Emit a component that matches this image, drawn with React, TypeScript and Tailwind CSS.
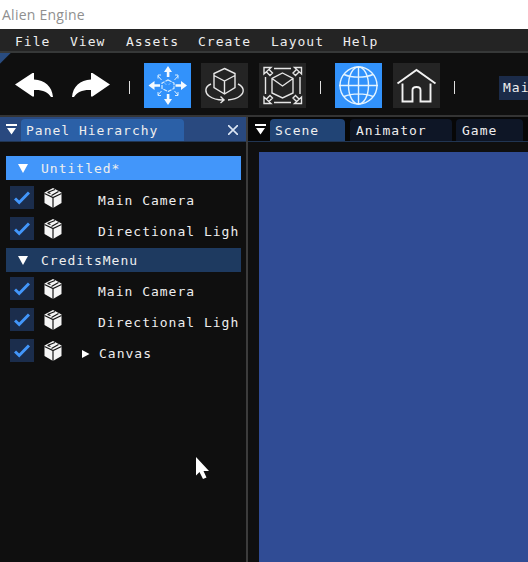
import React from 'react';

const menus = [
  { label: 'File', width: 'w-[55px]' },
  { label: 'View', width: 'w-[56px]' },
  { label: 'Assets', width: 'w-[72px]' },
  { label: 'Create', width: 'w-[73px]' },
  { label: 'Layout', width: 'w-[72px]' },
  { label: 'Help', width: 'w-[60px]' },
];

function ArrowIcon({ flip = false }: { flip?: boolean }) {
  return (
    <svg width="38" height="24" viewBox="0 0 38 24" className={flip ? '-scale-x-100' : ''}>
      <path d="M0 11.500 17.500 0H19V6.500C30 7.500 37 13 38 24h-2C33 19 27 16.500 19 17v6.500H17.500Z" fill="#fff" />
    </svg>
  );
}

function MoveIcon() {
  return (
    <svg width="47" height="45" viewBox="0 0 47 45" fill="none" stroke="#d5ecff">
      <g fill="#f4faff" stroke="none">
        <path d="M24 3l-4 6h2.800v5h2.600V9H28z" />
        <path d="M24 42l-4-6h2.800v-5h2.600v5H28z" />
        <path d="M4.500 22.500l6-4.500v3.300h5.500v2.400h-5.500V27z" />
        <path d="M43 22.500l-6-4.500v3.300h-5.500v2.400H37V27z" />
      </g>
      <path d="M24 17l6 3v5.500l-6 3-6-3V20z" strokeWidth="1.200" strokeDasharray="4 1" />
      <path d="M21 20.500l1 1m4-1l-1 1M17.500 17l-3.500-4m0 2.500V12h3M30.500 17l3.500-4m-3-1h3v3.500M17.500 28l-3.500 4m0-3v3.500h3M30.500 28l3.500 4m0-3v3.500h-3" strokeWidth="1" />
    </svg>
  );
}

function RotateIcon() {
  return (
    <svg width="47" height="45" viewBox="0 0 47 45" fill="none" stroke="#e6e6e6" strokeWidth="1.400">
      <path d="M23.500 5.500L34 10.500v14L23.500 31 13 24.500v-14zM13 12.500L23.500 18 34 12.500M23.500 18v13" />
      <path d="M10 21C3 24 4 30 8 33c4 3 9 4 14 4M37 21c6 3 7 8 2 12-3 2.500-7 3.500-12 4M19.500 33.500l3.500 3.500-3.500 3" />
    </svg>
  );
}

function ScaleIcon() {
  return (
    <svg width="47" height="45" viewBox="0 0 47 45" fill="none" stroke="#e6e6e6" strokeWidth="1.400">
      <path d="M15 5.500h17M15 39.500h17M6.500 14v17M41 14v17" />
      <path d="M23.500 10L34 15.500V30l-10.500 5L13 30V15.500zM13 15.500L23.500 23 34 15.500" />
      <g>
        <path d="M5 4.500h7l-7 6.500zM7.500 9l3.500 3.500 2.500-2.500L10 6.500" />
        <path d="M42.500 4.500h-7l7 6.500zM40 9l-3.500 3.500-2.500-2.500 3.500-3.500" />
        <path d="M5 40.500h7L5 34zM7.500 36l3.500-3.500 2.500 2.500-3.500 3.500" />
        <path d="M42.500 40.500h-7l7-6.500zM40 36l-3.500-3.500-2.500 2.500 3.500 3.500" />
      </g>
    </svg>
  );
}

function GlobeIcon() {
  return (
    <svg width="47" height="45" viewBox="0 0 47 45" fill="none" stroke="#e4f4ff" strokeWidth="1.400">
      <circle cx="23.500" cy="22.500" r="18.500" />
      <ellipse cx="23.500" cy="22.500" rx="10" ry="18.500" />
      <path d="M23.500 3v39M4 22.500h39M9 11.500c8 3.500 21 3.500 29 0M9 33.500c8-3.500 21-3.500 29 0" />
    </svg>
  );
}

function HomeIcon() {
  return (
    <svg width="47" height="45" viewBox="0 0 47 45" fill="none" stroke="#f2f2f2" strokeWidth="1.900">
      <path d="M4.500 20.500L23.500 7l19 13.500M9.500 20.500v18h10V27c0-4 8-4 8 0v11.500h10v-18" />
    </svg>
  );
}

function Tool({ active = false, className = '', children }: { active?: boolean; className?: string; children: React.ReactNode }) {
  return (
    <button className={`h-[45px] w-[47px] shrink-0 ${active ? 'bg-[#3292fb]' : 'bg-[#242424]'} ${className}`}>{children}</button>
  );
}

function Collapse() {
  return (
    <svg width="11" height="11" viewBox="0 0 11 11" className="shrink-0" fill="#fff">
      <path d="M0 0h11v2H0zM1 4h9L5.500 10.500z" />
    </svg>
  );
}

function GroupHeader({ label, className }: { label: string; className: string }) {
  return (
    <div className={`ml-1.5 flex h-6 w-[235px] items-center pl-3 ${className}`}>
      <svg width="10" height="9" viewBox="0 0 10 9" fill="#fff"><path d="M0 0h10L5 9z" /></svg>
      <span className="ml-[13px] pt-0.5">{label}</span>
    </div>
  );
}

function ObjectRow({ label, expandable = false, indent = 'ml-[36px]' }: { label: string; expandable?: boolean; indent?: string }) {
  return (
    <div className="flex h-[31px] items-start pl-2.5">
      <span className="flex h-[23px] w-6 shrink-0 items-center justify-center bg-[#1b2d4c]">
        <svg width="16" height="14" viewBox="0 0 16 14" fill="none" stroke="#4296fa" strokeWidth="3"><path d="M1 7.500l4.200 4L15 1.500" /></svg>
      </span>
      <svg width="18" height="20" viewBox="0 0 18 20" className="ml-[10px] mt-[2px] shrink-0">
        <path d="M9 0l8.500 4.500v10.500L9 20 .5 15V4.500z" fill="#f5f5f5" />
        <path d="M.5 5.500L9 9.500l8.500-4M9 9.500V20M3.500 4.500L11 1.500M7.500 7.500L14.500 3.500M3.500 4.500l3 1" fill="none" stroke="#151515" strokeWidth="1.200" />
      </svg>
      {expandable ? (
        <>
          <svg width="8" height="8" viewBox="0 0 8 8" fill="#fff" className="ml-5 mt-[11px] shrink-0"><path d="M0 0l7.500 4L0 8z" /></svg>
          <span className="ml-[9px] mt-[5px]">{label}</span>
        </>
      ) : (
        <span className={`mt-[5px] ${indent}`}>{label}</span>
      )}
    </div>
  );
}

export default function App() {
  return (
    <div className="relative flex h-[562px] w-[528px] flex-col overflow-hidden whitespace-pre bg-[#0f0f0f] font-['DejaVu_Sans_Mono',monospace] text-[13px] leading-5 tracking-[1px] text-[#eeeeee]">
      <header className="h-[29px] shrink-0 bg-white pl-[2px] pt-[5px] font-['Open_Sans','Noto_Sans',sans-serif] text-[14px] tracking-[0.25px] text-[#8f8f8f]">Alien Engine</header>
      <nav className="flex h-6 shrink-0 items-center border-b-2 border-[#363838] bg-[#242424] pl-[15px] pt-[3px]">
        {menus.map((m) => <span key={m.label} className={m.width}>{m.label}</span>)}
      </nav>
      <section className="flex h-[62px] shrink-0 items-center bg-[linear-gradient(135deg,#294c80_7px,#0f0f0f_8px)] pb-[1px] pl-[15px] pt-[4px]">
        <span className="flex pb-0.5"><ArrowIcon /></span>
        <span className="ml-[19px] flex pb-0.5"><ArrowIcon flip /></span>
        <i className="ml-[19px] mt-1 h-[13px] w-px bg-[#e0e0e0]" />
        <Tool active className="ml-[14px]"><MoveIcon /></Tool>
        <Tool className="ml-[10px]"><RotateIcon /></Tool>
        <Tool className="ml-[11px]"><ScaleIcon /></Tool>
        <i className="ml-[14px] mt-1 h-[13px] w-px bg-[#e0e0e0]" />
        <Tool active className="ml-[14px]"><GlobeIcon /></Tool>
        <Tool className="ml-[11px]"><HomeIcon /></Tool>
        <i className="ml-[14px] mt-1 h-[13px] w-px bg-[#e0e0e0]" />
        <div className="ml-[44px] mt-1 flex h-6 w-[29px] shrink-0 items-center bg-[#1b2b49] pl-1">Mai</div>
      </section>
      <main className="flex min-h-0 flex-1 border-t-2 border-[#343434]">
        <aside className="flex w-[246px] shrink-0 flex-col">
          <div className="flex h-[25px] items-center border-b border-[#213552] bg-[#29497f] pl-1.5">
            <Collapse />
            <div className="ml-1 mt-[2px] h-[22px] w-[163px] rounded-t bg-[#2b60a7] pl-[5px] pt-0.5">Panel Hierarchy</div>
            <svg width="10" height="10" viewBox="0 0 10 10" className="ml-11 mt-0.5" stroke="#dce6f4" strokeWidth="1.600"><path d="M0 0l10 10M10 0L0 10" /></svg>
          </div>
          <GroupHeader label="Untitled*" className="mt-[14px] bg-[#4296fa]" />
          <div className="mt-[6px]">
            <ObjectRow label="Main Camera" />
            <ObjectRow label="Directional Ligh" indent="ml-[36px]" />
          </div>
          <GroupHeader label="CreditsMenu" className="bg-[#1e3a60]" />
          <div className="mt-[5px]">
            <ObjectRow label="Main Camera" />
            <ObjectRow label="Directional Ligh" indent="ml-[36px]" />
            <ObjectRow label="Canvas" expandable />
          </div>
        </aside>
        <div className="w-[2px] shrink-0 bg-[#3c3c3c]" />
        <section className="flex min-w-0 flex-1 flex-col">
          <div className="flex h-[25px] shrink-0 items-center border-b border-[#213552] bg-[#070707] pl-[7px]">
            <Collapse />
            <div className="ml-1 mt-[2px] h-[22px] w-[75px] shrink-0 rounded-t bg-[#214475] pl-[5px] pt-0.5">Scene</div>
            <div className="ml-[5px] mt-[2px] h-[22px] w-[102px] shrink-0 rounded-t bg-[#0e1626] pl-[6px] pt-0.5">Animator</div>
            <div className="ml-1 mt-[2px] h-[22px] w-[67px] shrink-0 rounded-t bg-[#0e1626] pl-[6px] pt-0.5">Game</div>
          </div>
          <div className="ml-[11px] mt-[10px] flex-1 bg-[#304c95]" />
        </section>
      </main>
      <svg width="14" height="22" viewBox="0 0 14 22" className="absolute left-[196px] top-[457px]" fill="#fff">
        <path d="M0 0v18.500l3.500-3.500 3.500 7 3.500-1.500-3-6.500H13z" />
      </svg>
    </div>
  );
}
